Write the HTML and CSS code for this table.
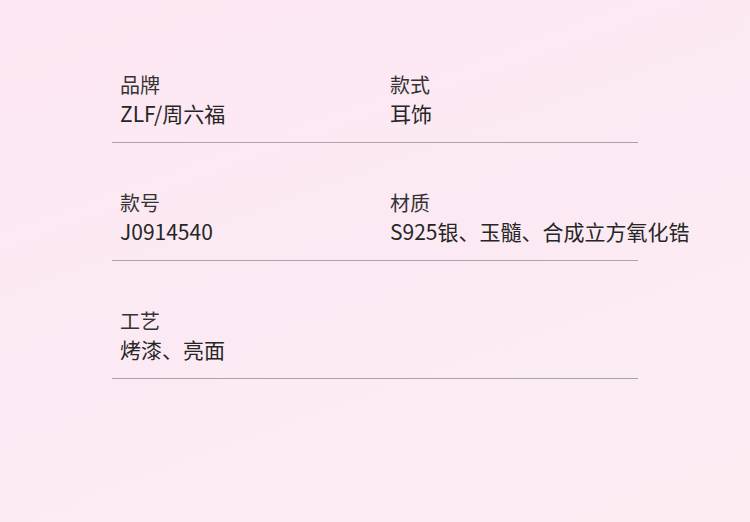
FILE: index.html
```html
<!DOCTYPE html>
<html lang="zh">
<head>
<meta charset="utf-8">
<link rel="stylesheet" href="styles.css">
</head>
<body>
<div class="page">
  <div class="specs">
    <div class="row">
      <div class="cell"><div class="label">品牌</div><div class="value">ZLF/周六福</div></div>
      <div class="cell"><div class="label">款式</div><div class="value">耳饰</div></div>
    </div>
    <div class="row">
      <div class="cell"><div class="label">款号</div><div class="value">J0914540</div></div>
      <div class="cell"><div class="label">材质</div><div class="value">S925银、玉髓、合成立方氧化锆</div></div>
    </div>
    <div class="row">
      <div class="cell"><div class="label">工艺</div><div class="value">烤漆、亮面</div></div>
      <div class="cell"></div>
    </div>
  </div>
</div>
</body>
</html>
```

FILE: styles.css
```css
html, body {
  margin: 0;
  padding: 0;
}
body {
  width: 750px;
  height: 522px;
  overflow: hidden;
  background: linear-gradient(160deg, #fde7f2 0%, #fbeaf3 50%, #fcedf3 100%);
  font-family: "Noto Sans CJK SC", "Noto Sans", sans-serif;
  color: #2a2a2a;
}
.page {
  padding: 25px 0 0 112px;
}
.specs {
  width: 526px;
}
.row {
  display: grid;
  grid-template-columns: 270px 1fr;
  padding: 46px 0 15px;
  border-bottom: 1px solid #aaa2a7;
}
.cell {
  padding-left: 8px;
  white-space: nowrap;
}
.label {
  font-size: 20px;
  line-height: 28px;
  color: #333;
}
.value {
  font-size: 21px;
  line-height: 28px;
  color: #262626;
}
```
